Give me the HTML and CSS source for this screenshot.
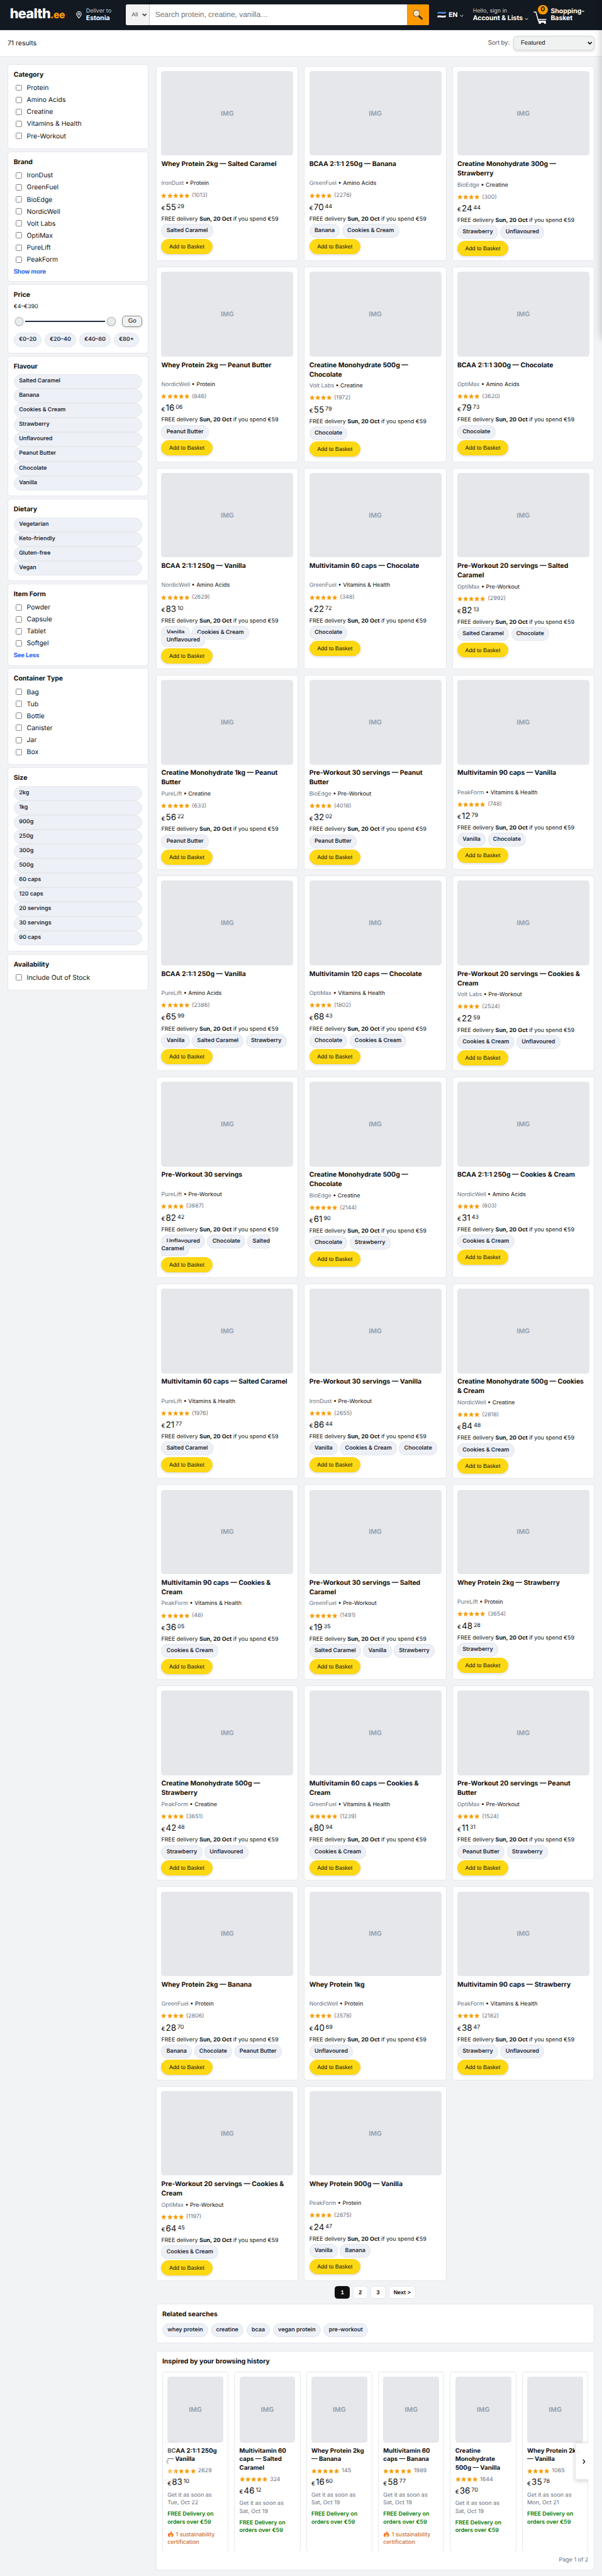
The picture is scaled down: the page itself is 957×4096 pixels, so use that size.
FILE: index.html
```html
<!DOCTYPE html>
<html lang="en">
<head>
<meta charset="utf-8">
<title>health.ee</title>
<link rel="stylesheet" href="styles.css">
</head>
<body>
<svg class="defs" width="0" height="0" aria-hidden="true">
  <symbol id="star" viewBox="0 0 24 24"><path d="M12 1.6l3.1 7 7.4.8-5.6 5 1.7 7.6L12 18.2 5.4 22l1.7-7.6-5.6-5 7.4-.8z" fill="#f59e0b" stroke="#f59e0b" stroke-width="1.4" stroke-linejoin="round"/></symbol>
  <symbol id="flame" viewBox="0 0 24 24"><path d="M13 1c1 4-4 6-4 10-2-1-2-3-2-4-3 3-5 6-5 9 0 5 4 8 10 8s10-3 10-8c0-3-1-5-3-8 0 2-1 3-2 3 0-4-1-8-4-10z" fill="#f4632a"/><path d="M12.500 9c0 3-4 4.500-4.500 8-1 0-1.500-1-1.500-2-1 1-1 2-1 3 0 3 3 6 6.500 6s6.500-2.500 6.500-6c0-2-.5-3-1.500-4.500 0 1-.5 2-1.500 2 0-3-1-5-3-6.500z" fill="#ffc04a"/><path d="M12 16c0 2-2 2.500-2 5 0 1.500 1 2.500 2.500 2.500S15 22.500 15 21c0-2-1.500-3-3-5z" fill="#fff3c4"/></symbol>
</svg>
<div class="page">
  <header class="top">
    <div class="logo">health<span class="logo-tld">.ee</span></div>
    <div class="deliver">
      <svg class="pin" viewBox="0 0 12 15"><path d="M6 14.200C3 10.500.9 8.200.9 5.700a5.100 5.100 0 0 1 10.200 0C11.100 8.200 9 10.500 6 14.200z" fill="none" stroke="#fff" stroke-width="1.400"/><circle cx="6" cy="5.800" r="2.100" fill="none" stroke="#fff" stroke-width="1.400"/></svg>
      <div><div class="small">Deliver to</div><div class="strong">Estonia</div></div>
    </div>
    <div class="search">
      <div class="search-cat">All<svg class="caret" viewBox="0 0 10 7"><path d="M1 1.200l4 4 4-4" fill="none" stroke="#444" stroke-width="2.200"/></svg></div>
      <div class="search-input">Search protein, creatine, vanilla…</div>
      <div class="search-btn"><svg class="lens" viewBox="0 0 22 22"><path d="M13.500 14l6.200 6" stroke="#26292c" stroke-width="3.600" stroke-linecap="round"/><circle cx="8.300" cy="8.300" r="6.800" fill="#f6dcb4" stroke="#6d675e" stroke-width="1.500"/><path d="M4.500 8a4 4 0 0 1 4-3.800" stroke="#fff" stroke-width="1.300" fill="none"/></svg></div>
    </div>
    <div class="lang">
      <svg class="flag" viewBox="0 0 19 14"><path d="M.5 2.200C6 .2 12 3 18.500.8v4C12 7 6 4 .5 6z" fill="#4a8ad8"/><path d="M.5 5.500C6 3.500 12 6.500 18.500 4.500v4.200C12 10.800 6 7.800.5 9.800z" fill="#0b0b0d"/><path d="M.5 9.500C6 7.500 12 10.500 18.500 8.500v4C12 14.600 6 11.500.5 13.500z" fill="#e9ecef"/></svg>
      <span class="lang-code">EN</span>
      <svg class="chev" viewBox="0 0 8 6"><path d="M.8 1l3.200 3.500L7.200 1" fill="none" stroke="#fff" stroke-width="1.200"/></svg>
    </div>
    <div class="account"><div class="small">Hello, sign in</div><div class="strong">Account &amp; Lists<svg class="chev chev-acc" viewBox="0 0 8 6"><path d="M.8 1l3.200 3.500L7.200 1" fill="none" stroke="#fff" stroke-width="1.200"/></svg></div></div>
    <div class="basket">
      <div class="cart"><svg class="cart-svg" viewBox="0 0 29 27"><path d="M.5 1.700h4.800l5.500 19.300h15.500M9.500 17.300h18" fill="none" stroke="#fff" stroke-width="2"/><path d="M10.500 21h16v5.500h-4v-2.500h-6.500v2.500h-4.500z" fill="#fff"/></svg><span class="badge">0</span></div>
      <div class="strong">Shopping-<br>Basket</div>
    </div>
  </header>
  <div class="bar">
    <div class="count">71 results</div>
    <div class="sort"><span class="sort-label">Sort by:</span><div class="sort-select">Featured<svg class="caret" viewBox="0 0 10 7"><path d="M1 1.200l4 4 4-4" fill="none" stroke="#111" stroke-width="2.200"/></svg></div></div>
  </div>
  <div class="layout">
    <aside class="filters" id="filters"></aside>
    <main class="main">
      <div class="grid" id="grid"></div>
      <nav class="pages"><span class="pg pg-on">1</span><span class="pg">2</span><span class="pg">3</span><span class="pg pg-next">Next &gt;</span></nav>
      <section class="related">
        <h2>Related searches</h2>
        <div class="row-chips"><span class="chip box">whey protein</span><span class="chip box">creatine</span><span class="chip box">bcaa</span><span class="chip box">vegan protein</span><span class="chip box">pre-workout</span></div>
      </section>
      <section class="inspired">
        <h2>Inspired by your browsing history</h2>
        <div class="carousel">
          <div class="track" id="track"></div>
          <div class="arrow arrow-prev"><svg viewBox="0 0 6 11"><path d="M4.800 1L1.200 5.500l3.600 4.500" fill="none" stroke="#111" stroke-width="1.800"/></svg></div>
          <div class="arrow arrow-next"><svg viewBox="0 0 6 11"><path d="M1.200 1l3.600 4.500L1.200 10" fill="none" stroke="#111" stroke-width="1.800"/></svg></div>
        </div>
        <div class="page-of">Page 1 of 2</div>
      </section>
    </main>
  </div>
  <div class="drawer"></div>
</div>
<script src="app.js"></script>
</body>
</html>
```
FILE: styles.css
```css
* { box-sizing: border-box; }
html, body { margin: 0; background: #f1f3f5; }
body { overflow: hidden; }
.defs { position: absolute; }
.page {
  zoom: 0.74766;
  position: relative;
  width: 1280px;
  height: 5478px;
  overflow: hidden;
  background: #f1f3f5;
  color: #111;
  font-family: Inter, "Liberation Sans", sans-serif;
  font-size: 14px;
  text-rendering: geometricPrecision;
}
h2, h3 { margin: 0; font-size: 14px; font-weight: 700; line-height: 20px; }

/* header */
.top {
  display: grid;
  grid-template-columns: 141px 106px 661.5px 76px 128.5px auto;
  align-items: center;
  height: 64px;
  padding-left: 21px;
  background: #131921;
  border-bottom: 1px solid #232f3e;
  color: #fff;
}
.logo { font-size: 29px; font-weight: 800; letter-spacing: -0.9px; line-height: 34px; }
.logo-tld { font-size: 21px; color: #ff9900; letter-spacing: -0.6px; }
.deliver { display: flex; align-items: center; gap: 9px; }
.pin { width: 12px; height: 15px; }
.small { font-size: 12px; line-height: 14px; color: #cccccc; }
.strong { font-size: 14px; font-weight: 700; line-height: 15px; white-space: nowrap; }
.search { display: flex; width: 644px; height: 45px; border-radius: 4px; overflow: hidden; background: #fff; font-family: "Liberation Sans", Arial, sans-serif; }
.search-cat { display: flex; align-items: center; justify-content: space-between; width: 50px; padding: 0 4px 0 12px; background: #f3f3f3; border-right: 1px solid #cdcdcd; color: #555; font-size: 12px; }
.caret { width: 10px; height: 7px; }
.search-input { flex: 1; padding-left: 12px; line-height: 45px; font-size: 16px; color: #757575; }
.search-btn { display: flex; align-items: center; justify-content: center; width: 46px; background: #ff9900; }
.lens { width: 22px; height: 22px; }
.lang { display: flex; align-items: center; }
.flag { width: 19px; height: 14px; }
.lang-code { margin-left: 5.5px; font-size: 14px; font-weight: 700; }
.chev { width: 8px; height: 6px; margin: 6px 0 0 5px; }
.chev-acc { margin: 0 0 -1px 4px; }
.basket { display: flex; align-items: center; gap: 8px; }
.cart { position: relative; width: 29px; height: 40px; }
.cart-svg { width: 29px; height: 27px; margin-top: 13px; }
.badge { position: absolute; left: 9px; top: 0; width: 22px; height: 20px; border-radius: 10px; background: #ff9900; color: #131921; font-size: 14px; font-weight: 700; line-height: 20px; text-align: center; }

/* results bar */
.bar { display: flex; align-items: center; justify-content: space-between; height: 55px; padding: 0 16px; background: #fff; box-shadow: 0 1px 2px rgba(0, 0, 0, 0.12); }
.sort { display: flex; align-items: center; gap: 9px; }
.sort-label { font-size: 13px; color: #555; letter-spacing: -0.3px; }
.sort-select { display: flex; align-items: center; justify-content: space-between; width: 172px; height: 31px; padding: 0 3px 0 14px; border: 1px solid #d5d9d9; border-radius: 8px; background: #f0f2f2; box-shadow: 0 2px 5px rgba(15, 17, 17, 0.13); font-family: "Liberation Sans", Arial, sans-serif; font-size: 13px; }

/* page layout */
.layout { display: grid; grid-template-columns: 300px 932px; gap: 16px; padding: 17px 16px 0; align-items: start; }
.filters { display: flex; flex-direction: column; gap: 5px; }
.panel { padding: 12px 12px 0 11.7px; background: #fff; border: 1px solid #e5e7eb; border-radius: 6px; }
.panel-list { padding-top: 4.500px; }
.panel-chips { display: flex; flex-direction: column; padding-top: 6.500px; }
.check { display: flex; align-items: center; height: 25.6px; padding-left: 4px; }
.check-box { width: 13.370px; height: 13.370px; margin-right: 10.600px; border: 1px solid #858585; border-radius: 2px; background: #fff; }
.more { font-size: 13px; font-weight: 700; line-height: 20px; margin-top: 4.500px; color: #2563eb; letter-spacing: -0.3px; }
.chip { border: 1px solid #e5e7eb; border-radius: 999px; background: #edf0f6; color: #1f2937; font-size: 12px; font-weight: 600; }
.chip.wide { height: 30.8px; padding-left: 10px; line-height: 27px; }
.chip.box { height: 29.600px; padding: 0 9.700px; line-height: 26.500px; white-space: nowrap; }
.range-text { font-size: 12px; line-height: 18px; margin-top: 5.500px; }
.range { display: flex; align-items: center; height: 25px; margin-top: 10px; padding-left: 3px; }
.thumb { width: 18px; height: 18px; border: 1px solid #b9bec5; border-radius: 50%; background: #ebebee; box-shadow: 0 1px 3px rgba(0, 0, 0, 0.25); }
.line { width: 170px; height: 2px; margin: 0 4px; background: #232f3e; }
.go { width: 43px; height: 25px; margin-left: 14px; border: 1px solid #888c8c; border-radius: 8px; background: #f0f2f2; box-shadow: 0 2px 5px rgba(15, 17, 17, 0.12); font: 13px/22px "Liberation Sans", Arial, sans-serif; text-align: center; }
.price-chips { display: flex; gap: 6px; margin-top: 12px; }
.price-chips .chip { height: 30.600px; padding: 0 9.700px; line-height: 27px; white-space: nowrap; }

/* products */
.main { min-width: 0; padding-top: 4px; }
.grid { display: grid; grid-template-columns: repeat(3, 1fr); gap: 12px; grid-template-rows: 415.3px 415.3px 428.3px 415.3px 415.3px 428.3px 415.3px 415.3px 415.3px 412.3px 415.3px; }
.card { padding: 9.660px; background: #fff; border: 1px solid #e5e7eb; border-radius: 6px; }
.img { display: flex; align-items: center; justify-content: center; height: 180px; border-radius: 6px; background: #e5e7eb; color: #9ca3af; font-size: 14px; font-weight: 700; }
.card h3 { min-height: 37px; margin-top: 9px; }
.by { margin-top: 6.200px; font-size: 12px; line-height: 17px; }
.brand { color: #6b7280; }
.rating { display: flex; align-items: center; margin-top: 7.600px; height: 16px; font-size: 12px; color: #6b7280; }
.rating svg { width: 11.200px; height: 11.200px; margin-right: 1px; }
.rating-n { margin-left: 4px; }
.price { display: flex; align-items: center; height: 24px; margin-top: 6.800px; font-size: 12px; line-height: 18px; }
.price-eur { margin: 3px 1.500px 0 0; }
.price-int { font-size: 18px; line-height: 24px; }
.price-cents { margin: -6px 0 0 2.500px; }
.free { margin-top: 4.300px; font-size: 12px; line-height: 17px; white-space: nowrap; }
.flavours { margin-top: 8px; font-size: 12px; line-height: 16px; word-spacing: 1.100px; }
.flavours .chip { padding: 6px 9.660px; word-spacing: 0; border-radius: 14px; }
.add { display: block; width: 108.600px; height: 32px; margin-top: 9px; border: 1px solid #fcd200; border-radius: 16px; background: #ffd814; box-shadow: 0 2px 5px rgba(15, 17, 17, 0.15); font: 12px/29.500px "Liberation Sans", Arial, sans-serif; text-align: center; }

/* pagination */
.pages { display: flex; justify-content: center; gap: 6px; margin-top: 10.300px; font: 700 12px/25px "Liberation Sans", Arial, sans-serif; }
.pg { width: 32px; height: 27.700px; border: 1px solid #e5e7eb; border-radius: 6px; background: #fff; text-align: center; }
.pg-on { background: #111; border-color: #111; color: #fff; }
.pg-next { width: 58px; }

.related, .inspired { border: 1px solid #e5e7eb; border-radius: 6px; background: #fff; padding: 11.600px 11.660px 0; }
.related { height: 84px; margin-top: 10px; }
.row-chips { display: flex; gap: 6px; margin-top: 8.600px; }
.inspired { height: 467px; margin-top: 16.500px; }

/* browsing history carousel */
.carousel { position: relative; margin-top: 11.500px; overflow: hidden; }
.track { display: grid; grid-template-columns: repeat(6, 141px); gap: 12px; height: 382.500px; }
.mini { padding: 9.660px; border: 1px solid #e5e7eb; border-radius: 6px; }
.mini .img { height: 140px; }
.mini h3 { margin-top: 9px; font-size: 13px; line-height: 18.100px; }
.mini .rating { margin-top: 6.800px; }
.mini .price { margin-top: 6.100px; }
.soon { margin-top: 5.500px; font-size: 12px; line-height: 16.800px; color: #6b7280; }
.green { margin-top: 7.500px; font-size: 12px; font-weight: 600; line-height: 16.800px; color: #067d06; }
.cert { margin-top: 8.500px; font-size: 12px; line-height: 16.800px; color: #c2570c; }
.cert svg { width: 14px; height: 14px; margin-right: 4px; vertical-align: -2px; }
.arrow { position: absolute; top: 151.400px; display: flex; align-items: center; justify-content: center; height: 79px; border: 1px solid #e5e7eb; background: rgba(255, 255, 255, 0.94); box-shadow: 0 2px 8px rgba(0, 0, 0, 0.18); }
.arrow svg { width: 6px; height: 11px; }
.arrow-prev { left: 0; width: 29px; padding-right: 8px; border-radius: 0 4px 4px 0; opacity: 0.35; }
.arrow-next { right: -1px; width: 30px; padding-left: 8px; border-right: 0; border-radius: 4px 0 0 4px; }
.page-of { margin-top: 10.500px; font-size: 12px; line-height: 17px; color: #6b7280; text-align: right; }

/* closed drawer, only its shadow reaches the page */
.drawer { position: absolute; left: 1280px; top: 0; width: 360px; height: 720px; box-shadow: -2px 0 16px rgba(0, 0, 0, 0.22); }
```
FILE: app.js
```js
const filters = [
  { title: "Category", h: 181.4, checks: ["Protein", "Amino Acids", "Creatine", "Vitamins & Health", "Pre-Workout"] },
  { title: "Brand", h: 277, checks: ["IronDust", "GreenFuel", "BioEdge", "NordicWell", "Volt Labs", "OptiMax", "PureLift", "PeakForm"], more: "Show more" },
  { title: "Price", h: 147.2, price: ["€0–20", "€20–40", "€40–80", "€80+"] },
  { title: "Flavour", h: 299, chips: ["Salted Caramel", "Banana", "Cookies & Cream", "Strawberry", "Unflavoured", "Peanut Butter", "Chocolate", "Vanilla"] },
  { title: "Dietary", h: 175.3, chips: ["Vegetarian", "Keto-friendly", "Gluten-free", "Vegan"] },
  { title: "Item Form", h: 175, checks: ["Powder", "Capsule", "Tablet", "Softgel"], more: "See Less" },
  { title: "Container Type", h: 205.9, checks: ["Bag", "Tub", "Bottle", "Canister", "Jar", "Box"] },
  { title: "Size", h: 391.8, chips: ["2kg", "1kg", "900g", "250g", "300g", "500g", "60 caps", "120 caps", "20 servings", "30 servings", "90 caps"] },
  { title: "Availability", h: 78.5, checks: ["Include Out of Stock"] }
];

// title | brand | category | stars | reviews | euros | cents | flavours
const products = `Whey Protein 2kg — Salted Caramel|IronDust|Protein|5|1013|55|29|Salted Caramel
BCAA 2:1:1 250g — Banana|GreenFuel|Amino Acids|4|2278|70|44|Banana,Cookies & Cream
Creatine Monohydrate 300g — Strawberry|BioEdge|Creatine|4|300|24|44|Strawberry,Unflavoured
Whey Protein 2kg — Peanut Butter|NordicWell|Protein|5|846|16|06|Peanut Butter
Creatine Monohydrate 500g — Chocolate|Volt Labs|Creatine|4|1972|55|79|Chocolate
BCAA 2:1:1 300g — Chocolate|OptiMax|Amino Acids|4|3620|79|73|Chocolate
BCAA 2:1:1 250g — Vanilla|NordicWell|Amino Acids|5|2629|83|10|Vanilla,Cookies & Cream,Unflavoured
Multivitamin 60 caps — Chocolate|GreenFuel|Vitamins & Health|5|348|22|72|Chocolate
Pre-Workout 20 servings — Salted Caramel|OptiMax|Pre-Workout|5|2992|82|13|Salted Caramel,Chocolate
Creatine Monohydrate 1kg — Peanut Butter|PureLift|Creatine|5|633|56|22|Peanut Butter
Pre-Workout 30 servings — Peanut Butter|BioEdge|Pre-Workout|4|4018|32|02|Peanut Butter
Multivitamin 90 caps — Vanilla|PeakForm|Vitamins & Health|5|748|12|79|Vanilla,Chocolate
BCAA 2:1:1 250g — Vanilla|PureLift|Amino Acids|5|2386|65|99|Vanilla,Salted Caramel,Strawberry
Multivitamin 120 caps — Chocolate|OptiMax|Vitamins & Health|4|1802|68|43|Chocolate,Cookies & Cream
Pre-Workout 20 servings — Cookies & Cream|Volt Labs|Pre-Workout|4|2524|22|59|Cookies & Cream,Unflavoured
Pre-Workout 30 servings|PureLift|Pre-Workout|4|3887|82|42|Unflavoured,Chocolate,Salted Caramel
Creatine Monohydrate 500g — Chocolate|BioEdge|Creatine|5|2144|61|90|Chocolate,Strawberry
BCAA 2:1:1 250g — Cookies & Cream|NordicWell|Amino Acids|4|603|31|43|Cookies & Cream
Multivitamin 60 caps — Salted Caramel|PureLift|Vitamins & Health|5|1976|21|77|Salted Caramel
Pre-Workout 30 servings — Vanilla|IronDust|Pre-Workout|4|2655|86|44|Vanilla,Cookies & Cream,Chocolate
Creatine Monohydrate 500g — Cookies & Cream|NordicWell|Creatine|4|2818|84|48|Cookies & Cream
Multivitamin 90 caps — Cookies & Cream|PeakForm|Vitamins & Health|5|48|36|05|Cookies & Cream
Pre-Workout 30 servings — Salted Caramel|GreenFuel|Pre-Workout|5|1491|19|35|Salted Caramel,Vanilla,Strawberry
Whey Protein 2kg — Strawberry|PureLift|Protein|5|3654|48|28|Strawberry
Creatine Monohydrate 500g — Strawberry|PeakForm|Creatine|4|3651|42|48|Strawberry,Unflavoured
Multivitamin 60 caps — Cookies & Cream|GreenFuel|Vitamins & Health|5|1239|80|94|Cookies & Cream
Pre-Workout 20 servings — Peanut Butter|OptiMax|Pre-Workout|4|1524|11|31|Peanut Butter,Strawberry
Whey Protein 2kg — Banana|GreenFuel|Protein|4|2806|28|70|Banana,Chocolate,Peanut Butter
Whey Protein 1kg|NordicWell|Protein|4|3578|40|69|Unflavoured
Multivitamin 90 caps — Strawberry|PeakForm|Vitamins & Health|4|2182|38|47|Strawberry,Unflavoured
Pre-Workout 20 servings — Cookies & Cream|OptiMax|Pre-Workout|4|1197|64|45|Cookies & Cream
Whey Protein 900g — Vanilla|PeakForm|Protein|4|2875|24|47|Vanilla,Banana`.split("\n").map(l => l.split("|"));

// title | stars | reviews | euros | cents | date | certified
const history_ = `BCAA 2:1:1 250g — Vanilla|5|2629|83|10|Tue, Oct 22|y
Multivitamin 60 caps — Salted Caramel|5|324|46|12|Sat, Oct 19|
Whey Protein 2kg — Banana|5|145|16|60|Sat, Oct 19|
Multivitamin 60 caps — Banana|5|1989|58|77|Sat, Oct 19|y
Creatine Monohydrate 500g — Vanilla|4|1644|36|70|Sat, Oct 19|
Whey Protein 2kg — Vanilla|4|1065|35|78|Mon, Oct 21|`.split("\n").map(l => l.split("|"));

const esc = s => s.replace(/&/g, "&amp;");
const stars = n => '<svg><use href="#star"/></svg>'.repeat(+n);
const rating = (n, t) => `<div class="rating">${stars(n)}<span class="rating-n">${t}</span></div>`;
const price = (a, b) => `<div class="price"><span class="price-eur">€</span><span class="price-int">${a}</span><span class="price-cents">${b}</span></div>`;

document.getElementById("filters").innerHTML = filters.map(f => {
  let body = "";
  if (f.checks) body = `<div class="panel-list">${f.checks.map(c => `<div class="check"><span class="check-box"></span>${esc(c)}</div>`).join("")}</div>`;
  if (f.chips) body = `<div class="panel-chips">${f.chips.map(c => `<span class="chip wide">${esc(c)}</span>`).join("")}</div>`;
  if (f.price) body = `<div class="range-text">€4–€390</div><div class="range"><span class="thumb"></span><span class="line"></span><span class="thumb"></span><span class="go">Go</span></div><div class="price-chips">${f.price.map(c => `<span class="chip">${c}</span>`).join("")}</div>`;
  if (f.more) body += `<div class="more">${f.more}</div>`;
  return `<section class="panel" style="height:${f.h}px"><h3>${f.title}</h3>${body}</section>`;
}).join("");

document.getElementById("grid").innerHTML = products.map(([t, b, c, s, n, e, ct, fl]) =>
  `<article class="card"><div class="img">IMG</div><h3>${esc(t)}</h3>
  <div class="by"><span class="brand">${b}</span> • ${esc(c)}</div>${rating(s, `(${n})`)}${price(e, ct)}
  <div class="free">FREE delivery <b>Sun, 20 Oct</b> if you spend €59</div>
  <div class="flavours">${fl.split(",").map(x => `<span class="chip">${esc(x)}</span>`).join(" ")}</div>
  <div class="add">Add to Basket</div></article>`).join("");

document.getElementById("track").innerHTML = history_.map(([t, s, n, e, ct, d, y]) =>
  `<article class="mini"><div class="img">IMG</div><h3>${t}</h3>${rating(s, n)}${price(e, ct)}
  <div class="soon">Get it as soon as ${d}</div><div class="green">FREE Delivery on orders over €59</div>
  ${y ? '<div class="cert"><svg><use href="#flame"/></svg>1 sustainability certification</div>' : ""}</article>`).join("");
```
